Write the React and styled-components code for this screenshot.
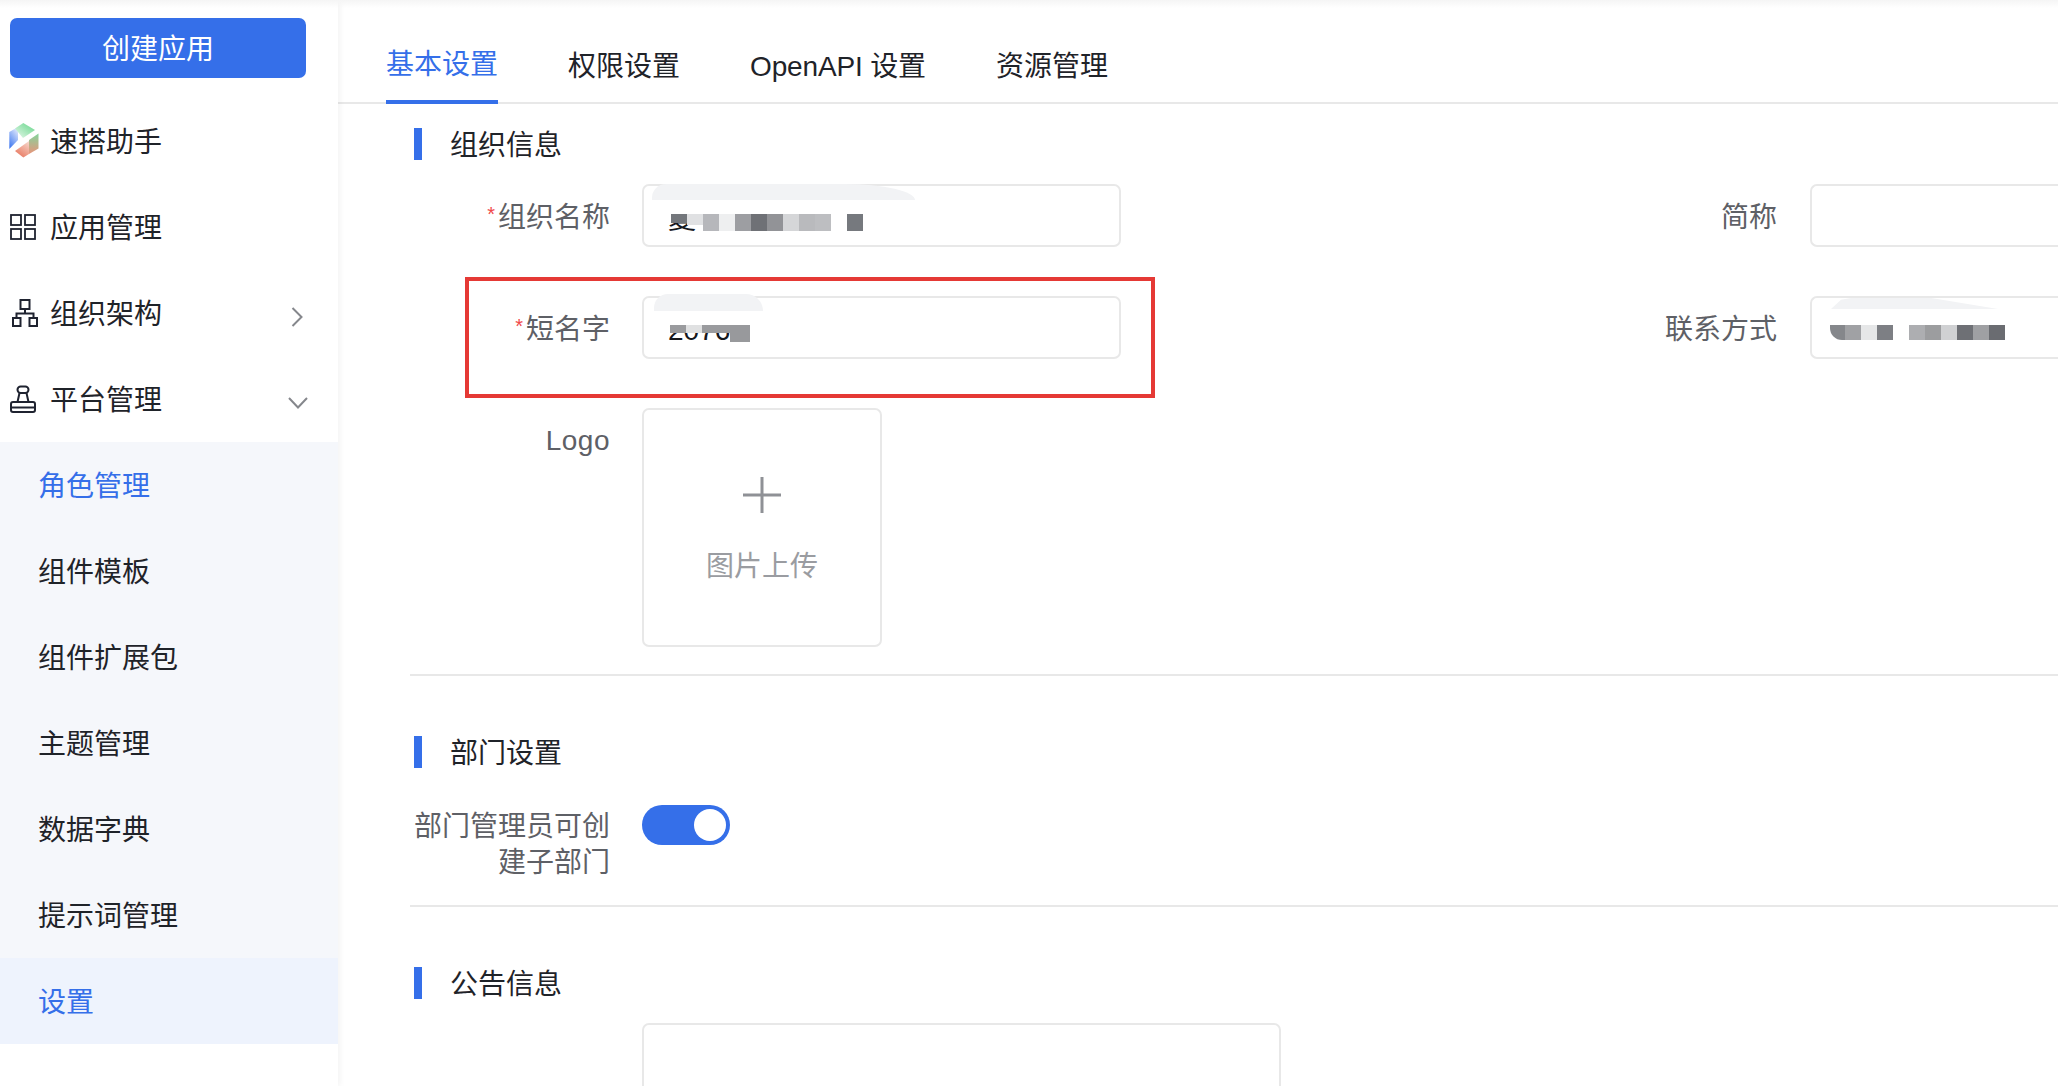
import React from "react";
import styled, { createGlobalStyle } from "styled-components";

const BLUE = "#356fe9";
const TEXT = "#1f2329";

const Global = createGlobalStyle`
  html, body { margin: 0; padding: 0; background: #fff; }
  body { font-family: "Liberation Sans", "Noto Sans CJK SC", sans-serif; color: ${TEXT}; }
  * { box-sizing: border-box; }
`;

const Page = styled.div`
  position: relative;
  display: flex;
  width: 2058px;
  height: 1086px;
  overflow: hidden;
  background: #fff;
`;
const TopShade = styled.div`
  position: absolute;
  inset: 0 0 auto 0;
  height: 8px;
  background: linear-gradient(#f5f5f5, rgba(255, 255, 255, 0));
  pointer-events: none;
  z-index: 3;
`;
const Sidebar = styled.aside`
  flex: 0 0 338px;
  padding-top: 18px;
  background: #fff;
  box-shadow: 2px 0 6px rgba(0, 0, 0, 0.05);
  z-index: 1;
`;
const CreateButton = styled.button`
  display: block;
  width: 296px;
  height: 60px;
  margin: 0 0 20px 10px;
  padding: 3px 0 0;
  border: 0;
  border-radius: 7px;
  background: ${BLUE};
  color: #fff;
  font: inherit;
  font-size: 28px;
  line-height: 57px;
`;
const MenuRow = styled.div`
  display: flex;
  align-items: center;
  height: 86px;
  padding: 0 30px 0 10px;
  font-size: 28px;
`;
const MenuText = styled.span`
  margin-bottom: 3px;
`;
const IconSlot = styled.span`
  display: flex;
  align-items: center;
  flex: 0 0 40px;
  color: #1f2330;
`;
const Chevron = styled.span`
  display: flex;
  margin-left: auto;
  margin-top: 8px;
  margin-right: ${(p) => p.$inset || 0}px;
  color: #85878c;
`;
const SubMenu = styled.div`
  background: #f5f7fb;
`;
const SubItem = styled.div`
  height: 86px;
  padding-left: 38px;
  font-size: 28px;
  line-height: 90px;
  color: ${(p) => (p.$on ? BLUE : TEXT)};
  background: ${(p) => (p.$sel ? "#eef3fd" : "transparent")};
`;

const Main = styled.main`
  flex: 1;
  min-width: 0;
`;
const Tabs = styled.div`
  display: flex;
  gap: 70px;
  height: 104px;
  padding-left: 48px;
  border-bottom: 2px solid #e8e8e8;
`;
const Tab = styled.div`
  height: 104px;
  padding-top: ${(p) => (p.$on ? 45 : 47)}px;
  font-size: 28px;
  line-height: 40px;
  letter-spacing: ${(p) => (p.$latin ? "-0.15px" : "0")};
  color: ${(p) => (p.$on ? BLUE : TEXT)};
  border-bottom: ${(p) => (p.$on ? `4px solid ${BLUE}` : "0")};
`;
const Content = styled.div`
  padding: 24px 0 0 72px;
`;
const Heading = styled.div`
  display: flex;
  align-items: center;
  gap: 28px;
  height: 32px;
  margin: 0 0 ${(p) => p.$after}px 4px;
  font-size: 28px;
  &::before {
    content: "";
    width: 8px;
    height: 32px;
    background: ${BLUE};
  }
`;
const HeadingText = styled.span`
  margin-bottom: 3px;
`;
const Divider = styled.div`
  height: 2px;
  margin: 27px 0 60px;
  background: #e8e8e8;
`;
const FormGrid = styled.div`
  position: relative;
  display: grid;
  grid-template-columns: 200px 479px 625px 1fr;
  grid-template-rows: 63px 63px 239px;
  column-gap: 32px;
  row-gap: 49px;
`;
const Label = styled.label`
  padding-top: ${(p) => (p.$latin ? 15 : 16)}px;
  padding-right: ${(p) => (p.$inset ? 1 : 0)}px;
  font-size: 28px;
  line-height: 36px;
  letter-spacing: ${(p) => (p.$latin ? "0.5px" : "0")};
  text-align: right;
  color: #5e6066;
`;
const Star = styled.span`
  display: inline-block;
  margin-right: 3px;
  font-size: 20px;
  line-height: 20px;
  vertical-align: 6px;
  color: #f0484a;
`;
const InputBox = styled.div`
  position: relative;
  height: 63px;
  border: 2px solid #e8e8e8;
  border-radius: 7px;
  background: #fff;
  ${(p) => p.$open && "border-right: 0; border-radius: 7px 0 0 7px;"}
`;
const Value = styled.span`
  position: absolute;
  left: ${(p) => p.$left}px;
  top: ${(p) => p.$top}px;
  font-size: 28px;
  line-height: 36px;
  color: #16181d;
  clip-path: inset(${(p) => p.$clip}px 0 0 0);
`;
const Patch = styled.div`
  position: absolute;
  left: ${(p) => p.$left}px;
  top: ${(p) => p.$top}px;
  width: ${(p) => p.$w}px;
  height: ${(p) => p.$h}px;
  background: #f2f3f5;
  border-radius: ${(p) => p.$radius};
  clip-path: ${(p) => p.$clip || "none"};
`;
const Mosaic = styled.div`
  position: absolute;
  left: ${(p) => p.$left}px;
  top: ${(p) => p.$top}px;
  display: flex;
  align-items: flex-start;
`;
const Cell = styled.span`
  display: block;
  flex: 0 0 ${(p) => p.$w}px;
  height: ${(p) => p.$h}px;
  background: ${(p) => p.$c};
  border-bottom-left-radius: ${(p) => p.$round || 0}px;
`;
const Upload = styled.div`
  display: flex;
  flex-direction: column;
  align-items: center;
  width: 240px;
  height: 239px;
  padding-top: 67px;
  border: 2px solid #e8e8e8;
  border-radius: 7px;
  color: #8f9196;
`;
const UploadText = styled.div`
  margin-top: 34px;
  font-size: 28px;
  line-height: 40px;
  color: #9a9ca1;
`;
const RedBox = styled.div`
  position: absolute;
  left: 55px;
  top: 93px;
  width: 690px;
  height: 121px;
  border: 4px solid #e53935;
  pointer-events: none;
`;
const SwitchRow = styled.div`
  display: grid;
  grid-template-columns: 200px 88px;
  column-gap: 32px;
  align-items: start;
  height: 73px;
`;
const LongLabel = styled.label`
  padding-top: 4px;
  font-size: 28px;
  line-height: 35.5px;
  text-align: right;
  color: #5e6066;
`;
const Switch = styled.div`
  display: flex;
  justify-content: flex-end;
  align-items: center;
  width: 88px;
  height: 40px;
  padding-right: 4px;
  border-radius: 20px;
  background: ${BLUE};
  &::after {
    content: "";
    width: 32px;
    height: 32px;
    border-radius: 50%;
    background: #fff;
  }
`;
const Notice = styled.div`
  width: 639px;
  height: 200px;
  margin-left: 232px;
  border: 2px solid #e8e8e8;
  border-radius: 7px;
`;

const LogoIcon = () => (
  <svg width="32" height="38" viewBox="8 7 32 38" style={{ marginLeft: -2 }}>
    <defs>
      <linearGradient id="gb" x1="0.7" y1="0" x2="0.2" y2="1">
        <stop offset="0" stopColor="#dfe8fc" />
        <stop offset="1" stopColor="#3f78f0" />
      </linearGradient>
      <linearGradient id="gg" x1="0.9" y1="0.2" x2="0.2" y2="0.9">
        <stop offset="0" stopColor="#76da96" />
        <stop offset="1" stopColor="#d5f3de" />
      </linearGradient>
      <linearGradient id="gr" x1="0.5" y1="0" x2="0.5" y2="1">
        <stop offset="0" stopColor="#84d59c" />
        <stop offset="1" stopColor="#e8957c" />
      </linearGradient>
      <linearGradient id="go" x1="0.9" y1="0" x2="0.3" y2="1">
        <stop offset="0" stopColor="#f6d6ca" />
        <stop offset="1" stopColor="#e8775f" />
      </linearGradient>
    </defs>
    <polygon points="9.3,17 18,12 18,25 9.3,34" fill="url(#gb)" />
    <polygon points="15,13.5 23.3,8 35,15 23,23" fill="url(#gg)" />
    <polygon points="29,25 38.5,18.5 38.5,33.5 29,39" fill="url(#gr)" />
    <polygon points="15,36 29,26 29,39 23.3,42.5" fill="url(#go)" />
  </svg>
);
const GridIcon = () => (
  <svg width="26" height="26" viewBox="0 0 26 26" fill="none" stroke="currentColor" strokeWidth="1.8">
    <rect x="1" y="1" width="10" height="10" />
    <rect x="15" y="1" width="10" height="10" />
    <rect x="1" y="15" width="10" height="10" />
    <rect x="15" y="15" width="10" height="10" />
  </svg>
);
const OrgIcon = () => (
  <svg width="28" height="28" viewBox="0 0 28 28" fill="none" stroke="currentColor" strokeWidth="2" style={{ marginLeft: 1 }}>
    <rect x="9.5" y="1" width="9" height="9" />
    <path d="M14 10v4.5M5.5 19v-4.5h17V19" />
    <rect x="2" y="19" width="7.5" height="8" />
    <rect x="18.5" y="19" width="7.5" height="8" />
  </svg>
);
const StampIcon = () => (
  <svg width="26" height="28" viewBox="0 0 26 28" fill="none" stroke="currentColor" strokeWidth="2">
    <rect x="7.5" y="1.5" width="11" height="6.5" rx="3.2" />
    <path d="M9.5 8 7.5 17M16.5 8l2 9" />
    <rect x="1" y="17" width="24" height="10" rx="2" />
    <path d="M1 22.5h24" />
  </svg>
);
const ChevronRight = () => (
  <svg width="12" height="20" viewBox="0 0 12 20" fill="none" stroke="currentColor" strokeWidth="2">
    <path d="M1.5 1 10.5 10 1.5 19" />
  </svg>
);
const ChevronDown = () => (
  <svg width="20" height="12" viewBox="0 0 20 12" fill="none" stroke="currentColor" strokeWidth="2">
    <path d="M1 1 10 10.5 19 1" />
  </svg>
);
const PlusIcon = () => (
  <svg width="38" height="36" viewBox="0 0 38 36" fill="none" stroke="currentColor" strokeWidth="3">
    <path d="M19 0v36M0 18h38" />
  </svg>
);

const mosaic1 = [
  [16, "#74777c", 9], [16, "#e0e1e3", 11], [16, "#b6b7bb", 17], [16, "#eeeff0", 17],
  [16, "#9d9ea2", 17], [16, "#6f7176", 17], [16, "#929397", 17], [16, "#d5d6d8", 17],
  [16, "#b9babd", 17], [16, "#bdbec1", 17], [16, "transparent", 17], [16, "#76797e", 17],
];
const mosaic2 = [
  [16, "#9a9b9e", 8], [16, "#e0e1e2", 8], [28, "#9a9b9e", 8], [20, "#98999c", 17],
];
const mosaic3 = [
  [15, "#85878b", 15, 12], [16, "#a0a1a4", 15], [16, "#e6e7e8", 15], [16, "#7d7f84", 15],
  [16, "transparent", 15], [16, "#adaeb1", 15], [16, "#9c9d9f", 15], [16, "#d0d1d3", 15],
  [16, "#6e7075", 15], [16, "#9fa0a3", 15], [16, "#6a6c71", 15],
];
const Cells = ({ data }) =>
  data.map(([w, c, h, r], i) => <Cell key={i} $w={w} $c={c} $h={h} $round={r} />);

const subItems = ["角色管理", "组件模板", "组件扩展包", "主题管理", "数据字典", "提示词管理", "设置"];

export default function App() {
  return (
    <Page>
      <Global />
      <TopShade />
      <Sidebar>
        <CreateButton>创建应用</CreateButton>
        <MenuRow><IconSlot><LogoIcon /></IconSlot><MenuText>速搭助手</MenuText></MenuRow>
        <MenuRow><IconSlot><GridIcon /></IconSlot><MenuText>应用管理</MenuText></MenuRow>
        <MenuRow>
          <IconSlot><OrgIcon /></IconSlot><MenuText>组织架构</MenuText>
          <Chevron $inset={5}><ChevronRight /></Chevron>
        </MenuRow>
        <MenuRow>
          <IconSlot><StampIcon /></IconSlot><MenuText>平台管理</MenuText>
          <Chevron><ChevronDown /></Chevron>
        </MenuRow>
        <SubMenu>
          {subItems.map((s, i) => (
            <SubItem key={s} $on={i === 0 || i === 6} $sel={i === 6}>{s}</SubItem>
          ))}
        </SubMenu>
      </Sidebar>
      <Main>
        <Tabs>
          <Tab $on>基本设置</Tab>
          <Tab>权限设置</Tab>
          <Tab $latin>OpenAPI 设置</Tab>
          <Tab>资源管理</Tab>
        </Tabs>
        <Content>
          <Heading $after={24}><HeadingText>组织信息</HeadingText></Heading>
          <FormGrid>
            <Label><Star>*</Star>组织名称</Label>
            <InputBox>
              <Value $left={24} $top={16} $clip={20}>夏</Value>
              <Patch $left={8} $top={-2} $w={263} $h={16} $radius="14px 70px 0 0 / 14px 16px 0 0" />
              <Mosaic $left={27} $top={28}><Cells data={mosaic1} /></Mosaic>
            </InputBox>
            <Label $inset>简称</Label>
            <InputBox $open />
            <Label><Star>*</Star>短名字</Label>
            <InputBox>
              <Value $left={24} $top={15} $clip={13}>2076</Value>
              <Patch $left={10} $top={-4} $w={109} $h={17} $radius="18px 22px 0 0" />
              <Mosaic $left={26} $top={27}><Cells data={mosaic2} /></Mosaic>
            </InputBox>
            <Label $inset>联系方式</Label>
            <InputBox $open>
              <Patch $left={19} $top={0} $w={167} $h={11} $radius="12px 0 0 0" $clip="polygon(0 100%, 6% 15%, 12% 0, 60% 0, 100% 100%)" />
              <Mosaic $left={18} $top={27}><Cells data={mosaic3} /></Mosaic>
            </InputBox>
            <Label $latin>Logo</Label>
            <Upload>
              <PlusIcon />
              <UploadText>图片上传</UploadText>
            </Upload>
            <RedBox />
          </FormGrid>
          <Divider />
          <Heading $after={37}><HeadingText>部门设置</HeadingText></Heading>
          <SwitchRow>
            <LongLabel>部门管理员可创建子部门</LongLabel>
            <Switch />
          </SwitchRow>
          <Divider />
          <Heading $after={24}><HeadingText>公告信息</HeadingText></Heading>
          <Notice />
        </Content>
      </Main>
    </Page>
  );
}
